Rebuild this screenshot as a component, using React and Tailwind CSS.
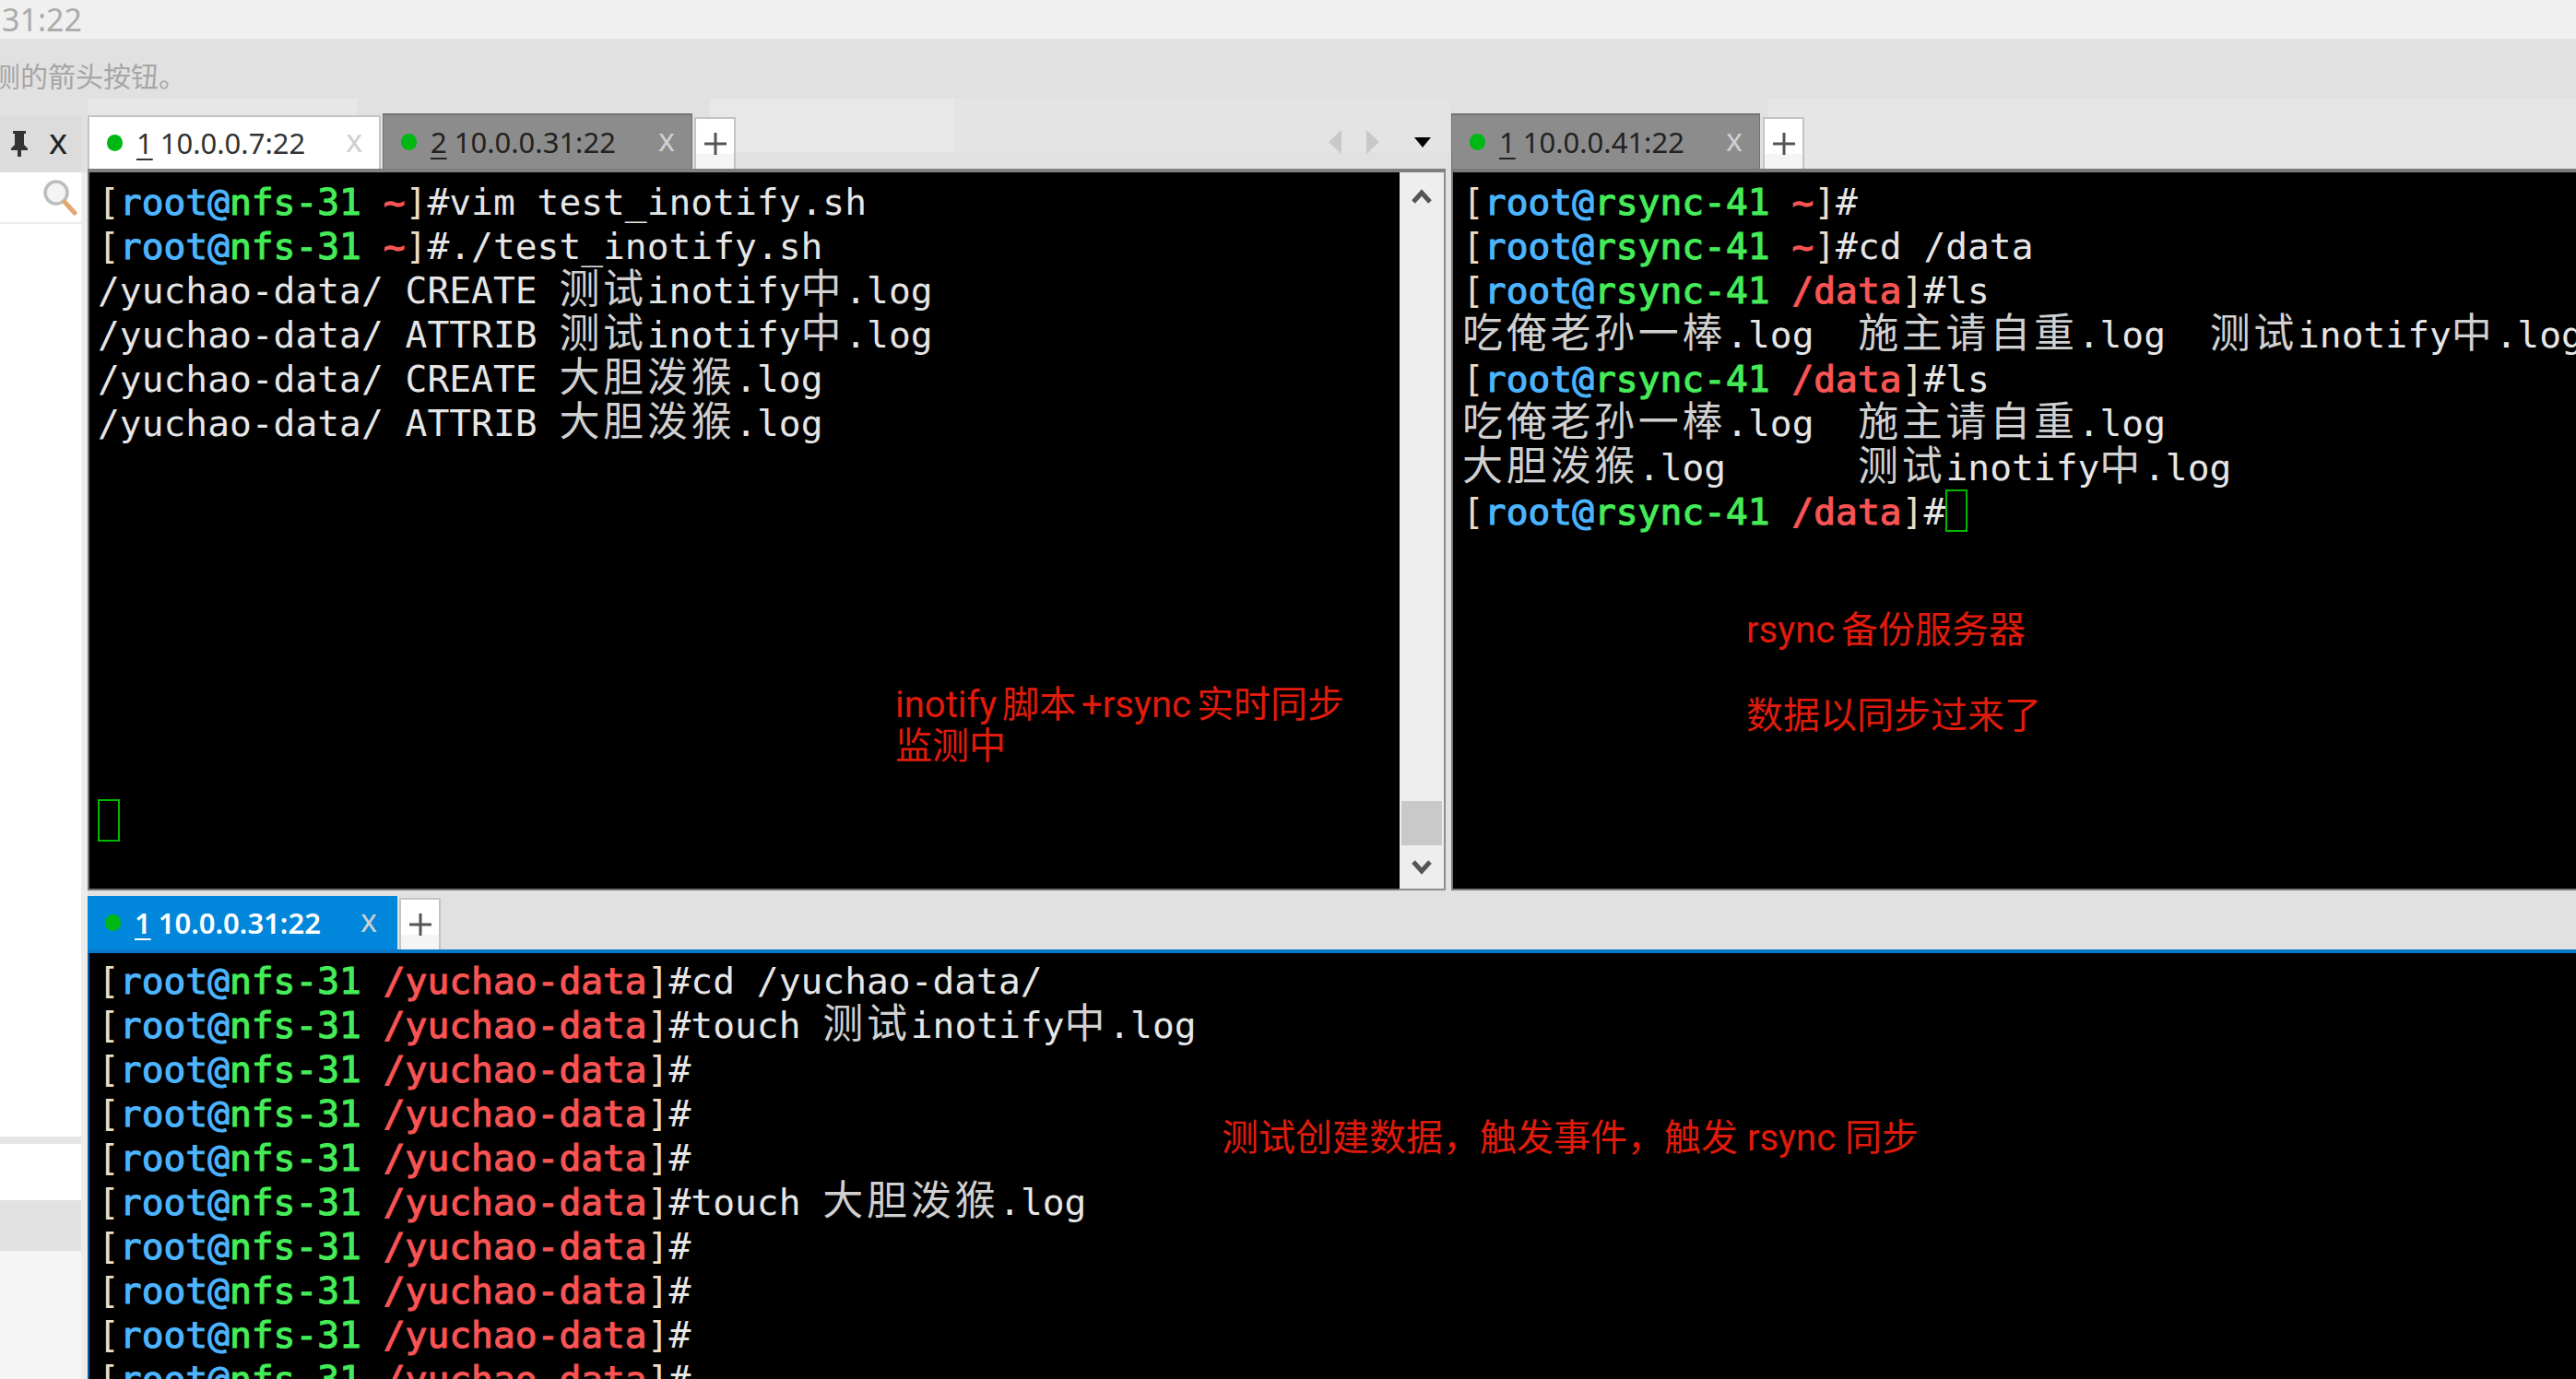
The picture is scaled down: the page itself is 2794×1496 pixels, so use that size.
import React from "react";

const MONO = "[font-family:'DejaVu_Sans_Mono','Noto_Sans_CJK_SC',monospace]";
const UI = "[font-family:'Noto_Sans','Noto_Sans_CJK_SC',sans-serif]";
const NOTE = "[font-family:Roboto,'Noto_Sans_CJK_SC',sans-serif]";
const STRONG = "[-webkit-text-stroke:1.1px_currentColor]";

function Mono({ text }) {
  // CJK glyphs occupy two terminal cells
  const parts = text.split(/([\u4e00-\u9fff]+)/);
  return parts.map((p, i) =>
    /[\u4e00-\u9fff]/.test(p) ? (
      <span key={i} className="[font-family:'Noto_Sans_CJK_SC',sans-serif] text-[44px] leading-[0] tracking-[3.7px] text-[#d0d0d0]">
        {p}
      </span>
    ) : (
      <span key={i}>{p}</span>
    )
  );
}

function Prompt({ user = "root", host, path, cmd = "" }) {
  return (
    <>
      <span className="text-[#eedcc4]">[</span>
      <span className={`${STRONG} text-[#4db4ff]`}>{user}@</span>
      <span className={`${STRONG} text-[#45ec58]`}>{host}</span>
      <span> </span>
      <span className={`${STRONG} text-[#f95454]`}>{path}</span>
      <span className="text-[#eedcc4]">]</span>
      <span>#</span>
      <Mono text={cmd} />
    </>
  );
}

function Line({ children }) {
  return <div className="h-[48px] leading-[48px] whitespace-pre">{children}</div>;
}

function Cursor() {
  return <span className="inline-block w-[24px] h-[46px] border-2 border-[#00b800] align-top"></span>;
}

function Tab({ num, host, active, current, w, closeGap }) {
  const bg = current
    ? "bg-[#0086da] text-white font-semibold self-end h-[58px]"
    : active
    ? "bg-white text-[#333] border-2 border-b-0 border-[#c4c4c4] h-[58px]"
    : "bg-[#8c8c8c] text-[#222] border-t-2 border-x border-[#727272] h-[60px]";
  return (
    <div className={`${bg} ${w} shrink-0 flex items-center pl-[19px] text-[31px] ${UI}`}>
      <span className="w-[17px] h-[18px] rounded-full bg-[#00b814] shrink-0"></span>
      <span className="ml-[15px] whitespace-nowrap">
        <span className="underline underline-offset-[5px] decoration-2">{num}</span> {host}
      </span>
      <span className={`${closeGap} text-[#cfcfcf] font-normal text-[34px] leading-none -mt-[6px]`}>x</span>
    </div>
  );
}

function Plus({ w = "w-[45px]" }) {
  return (
    <div className={`${w} h-[56px] self-end shrink-0 flex items-center justify-center border-2 border-b-0 border-[#c4c4c4] bg-[linear-gradient(#ffffff_70%,#f5f5f5_70%)]`}>
      <svg width="24" height="24" viewBox="0 0 24 24">
        <path d="M0 12H24M12 0V24" stroke="#555" strokeWidth="3" />
      </svg>
    </div>
  );
}

function Sidebar() {
  return (
    <div className="w-[95px] shrink-0 flex flex-col">
      <div className="h-[62px] w-[88px] bg-[#dcdcdc] flex items-center pl-[11px] gap-[22px]">
        <svg width="20" height="30" viewBox="0 0 20 30">
          <path d="M3 1H17V4H15V16L19 20V22H12V29H8V22H1V20L5 16V4H3Z" fill="#333" />
        </svg>
        <span className={`${UI} text-[38px] leading-none text-[#222] -mt-[8px]`}>x</span>
      </div>
      <div className="flex-1 flex flex-col border-r-[7px] border-[#ececec]">
        <div className="h-[56px] bg-white border-b-2 border-[#ededed] flex items-center justify-end pr-[4px]">
          <svg width="38" height="40" viewBox="0 0 38 40">
            <circle cx="15" cy="15" r="12" fill="#f4f4f4" stroke="#bdbdbd" strokeWidth="3.5" />
            <path d="M24 25L35 37" stroke="#e0a870" strokeWidth="5" strokeLinecap="round" />
          </svg>
        </div>
        <div className="h-[990px] bg-white"></div>
        <div className="h-[8px] bg-[#e6e6e6]"></div>
        <div className="h-[61px] bg-white"></div>
        <div className="h-[55px] bg-[#e1e1e1]"></div>
        <div className="flex-1 bg-[#f5f5f5]"></div>
      </div>
    </div>
  );
}

function Scrollbar() {
  return (
    <div className="w-[50px] shrink-0 bg-[#eeeeee] border-r-2 border-b-2 border-[#8e8e8e] flex flex-col items-center pt-[17px] pb-[14px]">
      <svg width="22" height="18" viewBox="0 0 22 18">
        <path d="M2 15L11 5L20 15" fill="none" stroke="#555" strokeWidth="5" />
      </svg>
      <div className="flex-1"></div>
      <div className="w-[44px] h-[48px] bg-[#c9c9c9] mb-[15px]"></div>
      <svg width="22" height="18" viewBox="0 0 22 18">
        <path d="M2 3L11 13L20 3" fill="none" stroke="#555" strokeWidth="5" />
      </svg>
    </div>
  );
}

export default function App() {
  const n = "nfs-31";
  const r = "rsync-41";
  const y = "/yuchao-data";
  const blank = Array.from({ length: 8 });
  return (
    <div className="relative w-[2794px] h-[1496px] overflow-hidden bg-[#e1e1e1] flex flex-col">
      {/* faint residues behind the tab strip */}
      <div className="absolute left-[1035px] top-[107px] w-[537px] h-[58px] bg-[#e4e4e4]"></div>
      <div className="absolute left-[95px] top-[107px] w-[293px] h-[58px] bg-[#e7e7e7]"></div>
      <div className="absolute left-[770px] top-[107px] w-[265px] h-[58px] bg-[#e8e8e8]"></div>
      <div className="absolute left-[1917px] top-[107px] w-[877px] h-[76px] bg-[#e6e6e6]"></div>

      <div className="h-[42px] shrink-0 bg-[#f0f0f0] flex">
        <div className={`w-[89px] overflow-hidden flex justify-end items-center ${UI} text-[34px] text-[#ababab] whitespace-nowrap`}>0.0.0.31:22</div>
      </div>
      <div className="h-[83px] shrink-0 flex relative">
        <div className={`w-[202px] h-[80px] overflow-hidden flex justify-end items-center ${UI} text-[30px] text-[#a6a6a6] whitespace-nowrap`}>
          右侧的箭头按钮。
        </div>
      </div>

      <div className="flex-1 min-h-0 flex relative">
        <Sidebar />
        <div className="flex-1 min-w-0 flex flex-col">
          <div className="h-[841px] shrink-0 flex">
            {/* left pane */}
            <div className="w-[1473px] shrink-0 flex flex-col">
              <div className="h-[58px] shrink-0 flex items-end gap-[2px]">
                <Tab num="1" host="10.0.0.7:22" active w="w-[318px]" closeGap="ml-[44px]" />
                <Tab num="2" host="10.0.0.31:22" w="w-[336px]" closeGap="ml-[46px]" />
                <Plus />
                <div className="flex-1 flex items-center justify-end h-[58px] pr-[16px]">
                  <svg width="16" height="26" viewBox="0 0 16 26"><path d="M15 0V26L1 13Z" fill="#c8c8c8" /></svg>
                  <svg className="ml-[25px]" width="16" height="26" viewBox="0 0 16 26"><path d="M1 0V26L15 13Z" fill="#c8c8c8" /></svg>
                  <svg className="ml-[37px]" width="18" height="11" viewBox="0 0 18 11"><path d="M0 0H18L9 11Z" fill="#000" /></svg>
                </div>
              </div>
              <div className="flex-1 min-h-0 flex border-t-4 border-[#808080]">
                <div className={`flex-1 min-w-0 bg-black border-l-2 border-b-2 border-[#707070] pl-[9px] pt-[8px] overflow-hidden ${MONO} text-[39.6px] text-[#e6e6e6]`}>
                  <Line><Prompt host={n} path="~" cmd="vim test_inotify.sh" /></Line>
                  <Line><Prompt host={n} path="~" cmd="./test_inotify.sh" /></Line>
                  <Line><Mono text="/yuchao-data/ CREATE 测试inotify中.log" /></Line>
                  <Line><Mono text="/yuchao-data/ ATTRIB 测试inotify中.log" /></Line>
                  <Line><Mono text="/yuchao-data/ CREATE 大胆泼猴.log" /></Line>
                  <Line><Mono text="/yuchao-data/ ATTRIB 大胆泼猴.log" /></Line>
                  {blank.map((_, i) => <Line key={i}> </Line>)}
                  <Line><Cursor /></Line>
                </div>
                <Scrollbar />
              </div>
            </div>
            {/* right pane */}
            <div className="flex-1 min-w-0 ml-[6px] flex flex-col">
              <div className="h-[58px] shrink-0 flex items-end gap-[3px]">
                <Tab num="1" host="10.0.0.41:22" w="w-[335px]" closeGap="ml-[45px]" />
                <Plus />
              </div>
              <div className={`flex-1 min-h-0 bg-black border-t-4 border-l-2 border-b-2 border-[#7a7a7a] pl-[10px] pt-[8px] overflow-hidden ${MONO} text-[39.6px] text-[#e6e6e6]`}>
                <Line><Prompt host={r} path="~" /></Line>
                <Line><Prompt host={r} path="~" cmd="cd /data" /></Line>
                <Line><Prompt host={r} path="/data" cmd="ls" /></Line>
                <Line><Mono text="吃俺老孙一棒.log  施主请自重.log  测试inotify中.log" /></Line>
                <Line><Prompt host={r} path="/data" cmd="ls" /></Line>
                <Line><Mono text="吃俺老孙一棒.log  施主请自重.log" /></Line>
                <Line><Mono text="大胆泼猴.log      测试inotify中.log" /></Line>
                <Line><Prompt host={r} path="/data" /><Cursor /></Line>
              </div>
            </div>
          </div>

          {/* bottom pane */}
          <div className="h-[68px] shrink-0 flex items-end gap-[2px] border-b-4 border-[#0a78c8]">
            <Tab num="1" host="10.0.0.31:22" current w="w-[336px]" closeGap="ml-[43px]" />
            <Plus w="w-[45px]" />
          </div>
          <div className={`flex-1 min-h-0 bg-black border-l-2 border-[#0b5a9a] pl-[9px] pt-[6px] overflow-hidden ${MONO} text-[39.6px] text-[#e6e6e6]`}>
            <Line><Prompt host={n} path={y} cmd="cd /yuchao-data/" /></Line>
            <Line><Prompt host={n} path={y} cmd="touch 测试inotify中.log" /></Line>
            <Line><Prompt host={n} path={y} /></Line>
            <Line><Prompt host={n} path={y} /></Line>
            <Line><Prompt host={n} path={y} /></Line>
            <Line><Prompt host={n} path={y} cmd="touch 大胆泼猴.log" /></Line>
            <Line><Prompt host={n} path={y} /></Line>
            <Line><Prompt host={n} path={y} /></Line>
            <Line><Prompt host={n} path={y} /></Line>
            <Line><Prompt host={n} path={y} /></Line>
          </div>
        </div>
      </div>

      {/* red annotations drawn over the terminals */}
      <div className={`absolute left-[971px] top-[742px] ${NOTE} text-[40px] leading-[45px] [word-spacing:-4px] text-[#e01b0c] whitespace-nowrap`}>
        inotify 脚本 +rsync 实时同步
        <br />
        监测中
      </div>
      <div className={`absolute left-[1894px] top-[661px] ${NOTE} text-[40px] leading-[46px] [word-spacing:-3px] text-[#e01b0c] whitespace-nowrap`}>rsync 备份服务器</div>
      <div className={`absolute left-[1894px] top-[754px] ${NOTE} text-[40px] leading-[46px] text-[#e01b0c] whitespace-nowrap`}>数据以同步过来了</div>
      <div className={`absolute left-[1325px] top-[1212px] ${NOTE} text-[40px] leading-[46px] text-[#e01b0c] whitespace-nowrap`}>测试创建数据，触发事件，触发 rsync 同步</div>
    </div>
  );
}
